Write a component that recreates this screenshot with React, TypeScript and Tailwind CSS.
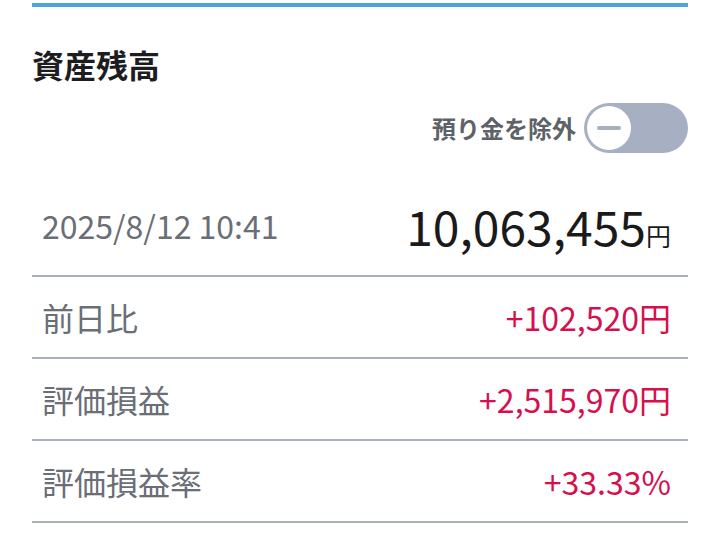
const font = { fontFamily: '"Noto Sans CJK JP", "Noto Sans", sans-serif' };

const rows = [
    { label: '前日比', value: '+102,520', unit: '円' },
    { label: '評価損益', value: '+2,515,970', unit: '円' },
    { label: '評価損益率', value: '+33.33%', unit: '' },
];

const Toggle = () => (
    <div className="flex h-[50px] w-[104px] items-center rounded-full bg-[#a7afc2] px-[3px]">
        <div className="flex h-[44px] w-[44px] items-center justify-center rounded-full bg-white">
            <div className="h-[4px] w-[24px] rounded-full bg-[#a7afc2]"></div>
        </div>
    </div>
);

export default function App() {
    return (
        <div className="min-h-[551px] bg-white" style={font}>
            <div className="ml-[32px] w-[656px] pt-[3px]">
                <div className="h-[4px] bg-[#4ca3dd]"></div>

                <h1 className="mt-[41px] text-[32px] font-bold leading-[32px] text-[#1d1d1f]">資産残高</h1>

                <div className="mt-[23px] flex h-[50px] items-center justify-end gap-[8px]">
                    <span className="text-[24px] font-bold text-[#5d6168]">預り金を除外</span>
                    <Toggle />
                </div>

                <div className="mt-[22px] flex h-[102px] items-center justify-between border-b-2 border-[#aab1bc] pl-[10px] pr-[17px]">
                    <span className="text-[32px] text-[#6a6e76]">2025/8/12 10:41</span>
                    <span className="flex items-baseline text-[#1a1a1a]">
                        <span className="text-[48px] leading-none">10,063,455</span>
                        <span className="text-[25px] leading-none">円</span>
                    </span>
                </div>

                {rows.map(row => (
                    <div
                        key={row.label}
                        className="flex h-[82px] items-center justify-between border-b-2 border-[#aab1bc] pl-[10px] pr-[17px]"
                    >
                        <span className="text-[32px] text-[#6a6e76]">{row.label}</span>
                        <span className="text-[32px] text-[#d4104e]">
                            {row.value}
                            {row.unit}
                        </span>
                    </div>
                ))}
            </div>
        </div>
    );
}
